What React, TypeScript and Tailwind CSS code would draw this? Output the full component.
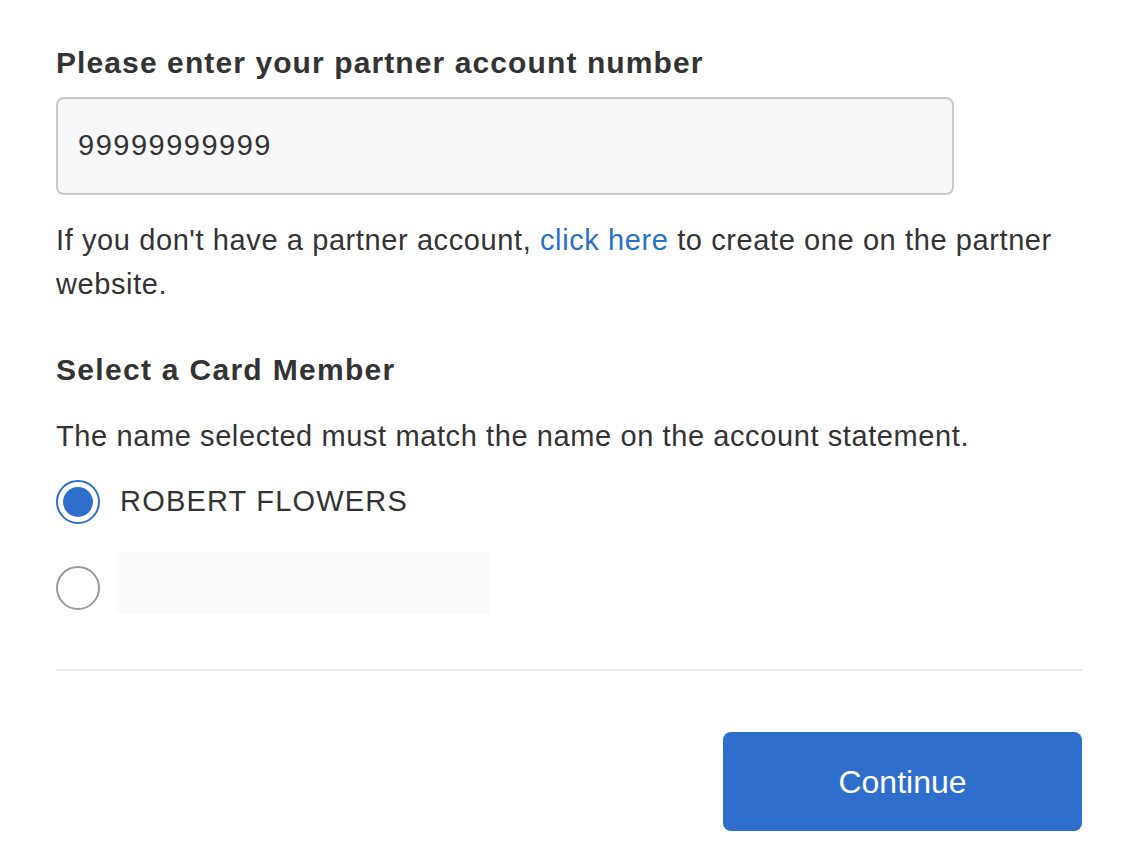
import React from "react";

export default function App() {
  return (
    <div className="min-h-[862px] w-[1130px] bg-white text-[#333333]" style={{ fontFamily: '"Liberation Sans", Arial, Helvetica, sans-serif' }}>
      <div className="pl-[56px] pr-[48px] pt-[45px]">
        <h2 className="text-[30px] font-bold leading-[36px] tracking-[1.1px]">Please enter your partner account number</h2>
        <div className="mt-[16px] flex h-[98px] w-[898px] items-center rounded-[8px] border-2 border-[#cacaca] bg-[#f7f8f9] pl-[20px] text-[29px] tracking-[1.5px]">
          99999999999
        </div>
        <p className="mt-[23px] text-[29px] leading-[44px] tracking-[0.6px]">
          If you don't have a partner account, <a className="text-[#2a6fc9]">click here</a> to create one on the partner website.
        </p>
        <h3 className="mt-[46px] text-[30px] font-bold leading-[36px] tracking-[1.3px]">Select a Card Member</h3>
        <p className="mt-[26px] text-[29px] leading-[44px] tracking-[0.6px]">The name selected must match the name on the account statement.</p>
        <div className="mt-[22px] flex h-[44px] items-center">
          <span className="flex h-[44px] w-[44px] items-center justify-center rounded-full border-2 border-[#2f6fcb]">
            <span className="h-[30px] w-[30px] rounded-full bg-[#2f6fcb]" />
          </span>
          <span className="ml-[20px] text-[29px] tracking-[1.2px]">ROBERT FLOWERS</span>
        </div>
        <div className="mt-[42px] flex h-[44px] items-center">
          <span className="h-[44px] w-[44px] shrink-0 rounded-full border-2 border-[#999999]" />
          <span className="mb-[10px] ml-[16px] h-[62px] w-[374px] shrink-0 bg-[#fafafa]" />
        </div>
        <div className="mt-[59px] h-[2px] w-[1026px] bg-[#e8e8e8]" />
        <div className="mt-[61px] flex w-[1026px] justify-end">
          <button className="h-[99px] w-[359px] rounded-[8px] bg-[#2f6fcb] text-[32px] text-white">Continue</button>
        </div>
      </div>
    </div>
  );
}
